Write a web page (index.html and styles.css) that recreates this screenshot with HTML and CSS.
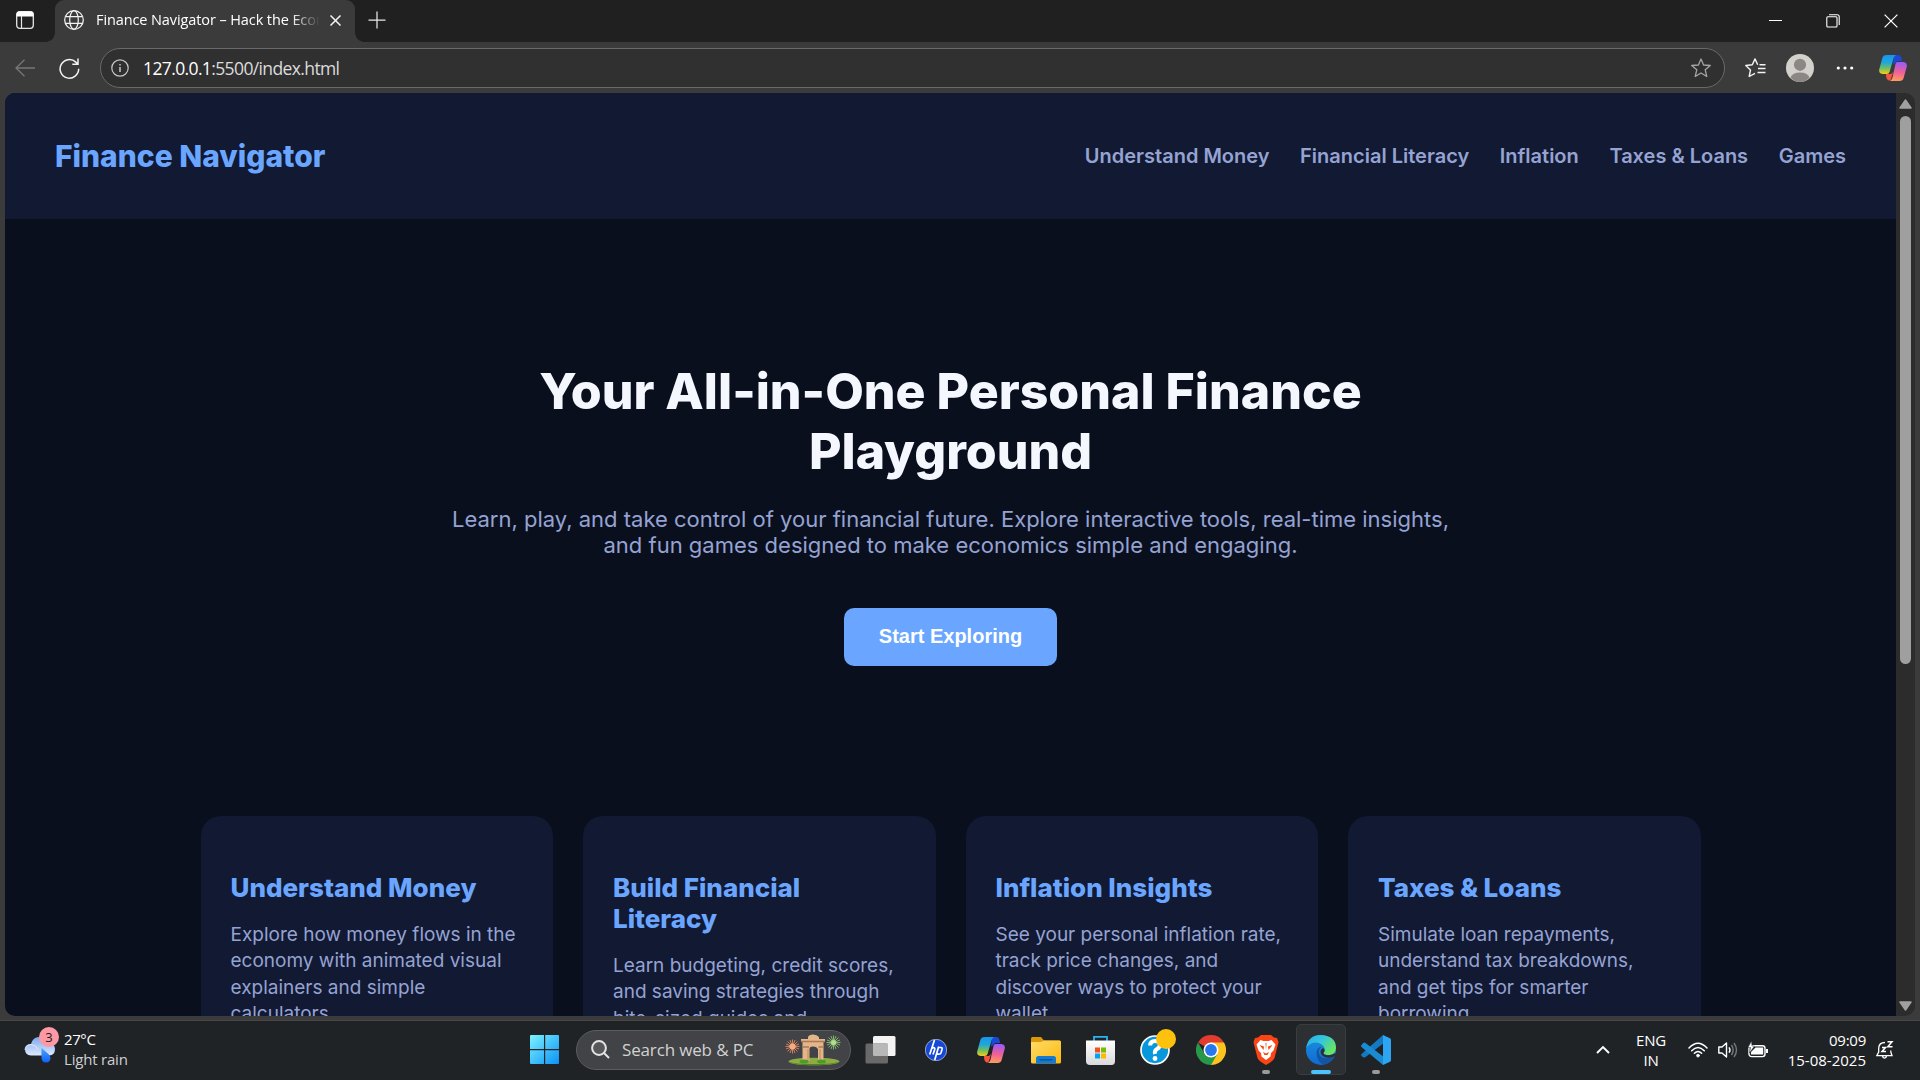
FILE: index.html
```html
<!DOCTYPE html>
<html lang="en">
<head>
<meta charset="utf-8">
<title>Finance Navigator – Hack the Economy</title>
<link rel="stylesheet" href="styles.css">
</head>
<body>
<svg width="0" height="0" class="defs" aria-hidden="true">
  <defs>
    <linearGradient id="cpA" x1="0" y1="0" x2="0" y2="1"><stop offset="0" stop-color="#1695ef"/><stop offset=".4" stop-color="#20a8d8"/><stop offset=".7" stop-color="#72bd63"/><stop offset="1" stop-color="#f5cf18"/></linearGradient>
    <linearGradient id="cpB" x1=".3" y1="0" x2=".2" y2="1"><stop offset="0" stop-color="#9a5cf5"/><stop offset=".5" stop-color="#ef5f98"/><stop offset="1" stop-color="#ffa05a"/></linearGradient>
    <linearGradient id="win" x1="0" y1="0" x2="1" y2="1"><stop offset="0" stop-color="#7df3ff"/><stop offset="1" stop-color="#0a92f5"/></linearGradient>
    <linearGradient id="fold" x1="0" y1="0" x2="1" y2="1"><stop offset="0" stop-color="#ffdc6a"/><stop offset="1" stop-color="#fbb90f"/></linearGradient>
    <linearGradient id="cloud" x1="0" y1="0" x2="0" y2="1"><stop offset="0" stop-color="#7ea9ee"/><stop offset="1" stop-color="#dce9fd"/></linearGradient>
    <linearGradient id="drop" x1="0" y1="0" x2="0" y2="1"><stop offset="0" stop-color="#4aa4f8"/><stop offset="1" stop-color="#0f62fb"/></linearGradient>
    <linearGradient id="edA" x1="0" y1="0" x2="1" y2=".6"><stop offset="0" stop-color="#27a9ee"/><stop offset=".5" stop-color="#35c7d8"/><stop offset="1" stop-color="#6be55f"/></linearGradient>
    <linearGradient id="edB" x1="0" y1="0" x2="0" y2="1"><stop offset="0" stop-color="#1b93e2"/><stop offset="1" stop-color="#0f6ad0"/></linearGradient>
    <linearGradient id="store" x1="0" y1="0" x2="0" y2="1"><stop offset="0" stop-color="#fff"/><stop offset="1" stop-color="#dadada"/></linearGradient>
    <symbol id="copilot" viewBox="0 0 28 26">
      <path d="M15 0H19.500Q21.500 0 22.200 2L23.200 6H19Q17 6 16.500 8L14 9.500Z" fill="#1b48d8"/>
      <path d="M7 19H12L14 17 12 24Q11.500 26 9.500 25.500 7.600 25 7.200 22Z" fill="#f4553d"/>
      <path d="M7.500 0H17Q15.300 .800 14.600 3L10.700 16.500Q10 19 7.500 19H3.500Q-.400 18.500 .200 14.500L3.300 3.200Q4.200 0 7.500 0Z" fill="url(#cpA)"/>
      <path d="M18.500 7H24.500Q28.400 7.500 27.800 11.500L24.700 22.800Q23.800 26 20.500 26H11Q12.700 25.200 13.400 23L16.500 9Q17 7 18.500 7Z" fill="url(#cpB)"/>
    </symbol>
  </defs>
</svg>

<div class="screen">
  <div class="titlebar">
    <div class="workspace">
      <svg width="18" height="18" viewBox="0 0 18 18"><rect x=".7" y=".7" width="16.600" height="16.600" rx="3" fill="none" stroke="#e6e6e6" stroke-width="1.300"/><path d="M.500 5.500V3Q.500.500 3 .500H15Q17.500.500 17.500 3V5.500Z" fill="#fff"/><path d="M5.500 5V17" stroke="#e6e6e6" stroke-width="1.200"/></svg>
    </div>
    <div class="tab">
      <svg class="globe" width="20" height="20" viewBox="0 0 20 20" fill="none" stroke="#f2f2f2" stroke-width="1.250"><circle cx="10" cy="10" r="9.300"/><ellipse cx="10" cy="10" rx="4.300" ry="9.300"/><path d="M1.500 6.600H18.500M1.500 13.400H18.500"/></svg>
      <span class="tab-title">Finance Navigator – Hack the Economy</span>
      <svg width="11" height="11" viewBox="0 0 11 11" stroke="#f5f5f5" stroke-width="1.500"><path d="M.500.500 10.500 10.500M10.500.500.500 10.500"/></svg>
    </div>
    <svg class="newtab" width="18" height="18" viewBox="0 0 18 18" stroke="#e8e8e8" stroke-width="1.250"><path d="M9 .500V17.500M.500 9H17.500"/></svg>
    <div class="window-controls">
      <svg width="13" height="13" viewBox="0 0 13 13"><path d="M0 6.500H13" stroke="#fff"/></svg>
      <svg width="14" height="14" viewBox="0 0 14 14" fill="none" stroke="#fff" stroke-width="1.100"><rect x=".8" y="2.800" width="10.200" height="10.200" rx="1"/><path d="M3 .700H11.200Q13.200.700 13.200 2.700V11"/></svg>
      <svg width="14" height="14" viewBox="0 0 14 14" stroke="#fff" stroke-width="1.250"><path d="M.600.600 13.400 13.400M13.400.600.600 13.400"/></svg>
    </div>
  </div>

  <div class="toolbar">
    <svg class="back" width="20" height="18" viewBox="0 0 20 18" fill="none" stroke="#777" stroke-width="1.300"><path d="M20 9H1M9.500.700 1 9 9.500 17.300"/></svg>
    <svg class="reload" width="21" height="21" viewBox="0 0 21 21" fill="none" stroke="#f4f4f4" stroke-width="1.500"><path d="M19.700 10.800A9.300 9.300 0 1 1 16.800 4.100L18.800 6M19 .500V6.200H13.300"/></svg>
    <div class="address">
      <svg width="18" height="18" viewBox="0 0 18 18" fill="none" stroke="#c8c8c8" stroke-width="1.200"><circle cx="9" cy="9" r="8.200"/><path d="M9 8V13M9 5V6.600" stroke-width="1.500"/></svg>
      <span class="url"><b>127.0.0.1</b>:5500/index.html</span>
      <svg class="star" width="20" height="20" viewBox="0 0 20 20" fill="none" stroke="#a5a5a5" stroke-width="1.300" stroke-linejoin="round"><path d="M10 1 12.600 7 19.300 7.500 14.200 11.800 15.800 18.500 10 15 4.200 18.500 5.800 11.800.700 7.500 7.400 7Z"/></svg>
    </div>
    <svg class="favs" width="21" height="20" viewBox="0 0 21 20" fill="none" stroke="#f4f4f4" stroke-width="1.400" stroke-linejoin="round"><path d="M10 15.400 4.200 18.500 5.500 12 .800 7.500 7.300 6.700 10 .900 12.700 6.700M13 10.500H20.500M12.500 14.500H20.500M14.500 6.700H20.500"/></svg>
    <svg class="avatar" width="28" height="28" viewBox="0 0 28 28"><circle cx="14" cy="14" r="14" fill="#d4d1cd"/><circle cx="14" cy="10.800" r="6.100" fill="#8b8784"/><path d="M4.500 23.500Q6.500 18.500 14 18.500T23.500 23.500Q19.500 28 14 28T4.500 23.500Z" fill="#8b8784"/></svg>
    <svg class="dots" width="18" height="4" viewBox="0 0 18 4" fill="#fff"><circle cx="2.300" cy="2" r="1.600"/><circle cx="9" cy="2" r="1.600"/><circle cx="15.700" cy="2" r="1.600"/></svg>
    <svg class="cp" width="28" height="26"><use href="#copilot"/></svg>
  </div>

  <div class="viewport">
    <div class="page">
      <header class="site-header">
        <div class="logo">Finance Navigator</div>
        <nav class="nav"><a>Understand Money</a><a>Financial Literacy</a><a>Inflation</a><a>Taxes &amp; Loans</a><a>Games</a></nav>
      </header>
      <section class="hero">
        <h1>Your All-in-One Personal Finance Playground</h1>
        <p>Learn, play, and take control of your financial future. Explore interactive tools, real-time insights, and fun games designed to make economics simple and engaging.</p>
        <button class="cta">Start Exploring</button>
      </section>
      <section class="cards">
        <article class="card"><h3>Understand Money</h3><p>Explore how money flows in the economy with animated visual explainers and simple calculators.</p></article>
        <article class="card"><h3>Build Financial Literacy</h3><p>Learn budgeting, credit scores, and saving strategies through bite-sized guides and</p></article>
        <article class="card"><h3>Inflation Insights</h3><p>See your personal inflation rate, track price changes, and discover ways to protect your wallet.</p></article>
        <article class="card"><h3>Taxes &amp; Loans</h3><p>Simulate loan repayments, understand tax breakdowns, and get tips for smarter borrowing.</p></article>
      </section>
    </div>
    <div class="scrollbar">
      <svg width="13" height="10" viewBox="0 0 13 10"><path d="M6.500 1 12 9H1Z" fill="#a0a0a0" stroke="#a0a0a0" stroke-width="1.500" stroke-linejoin="round"/></svg>
      <div class="thumb"></div>
      <svg class="down" width="13" height="10" viewBox="0 0 13 10"><path d="M6.500 9 12 1H1Z" fill="#a0a0a0" stroke="#a0a0a0" stroke-width="1.500" stroke-linejoin="round"/></svg>
    </div>
  </div>

  <div class="taskbar">
    <div class="weather">
      <div class="weather-icon">
        <svg width="32" height="37" viewBox="0 0 32 37"><path d="M7 29.500Q1 29 1 23.500T7 18Q9 11 15 11T23 17Q31 17 31 23T25 29.500Z" fill="url(#cloud)"/><path d="M1 24Q1 19 7 18.500 12 19 14 23" fill="none" stroke="#f0f6ff" stroke-width="1" opacity=".7"/><path d="M17.500 22 24.500 28Q26.500 30 26.500 32.500 26 36.500 22 36.500T17.500 32Z" fill="url(#drop)"/></svg>
        <span class="badge">3</span>
      </div>
      <div class="weather-text"><span>27°C</span><span class="dim">Light rain</span></div>
    </div>
    <div class="apps">
      <div class="app start"><svg width="30" height="30" viewBox="0 0 30 30"><path d="M1 0H14V14H0V1Q0 0 1 0ZM15.200 0H28Q29 0 29 1V14H15.200ZM0 15.200H14V29H1Q0 29 0 28ZM15.200 15.200H29V28Q29 29 28 29H15.200Z" fill="url(#win)"/></svg></div>
      <div class="search">
        <svg width="19" height="19" viewBox="0 0 19 19" fill="none" stroke="#e4e4e4" stroke-width="2"><circle cx="8" cy="8" r="6.900" fill="#56595c"/><path d="M13 13 18 18"/></svg>
        <span>Search web &amp; PC</span>
        <svg class="gate" width="56" height="33" viewBox="0 0 56 33">
          <ellipse cx="29" cy="28.500" rx="25.500" ry="3.800" fill="#8cad42"/><path d="M3.500 28.500Q8 32.300 29 32.300T54 28.500Q50 31 29 31T3.500 28.500" fill="#587d29"/>
          <path d="M23 4Q24 1.500 28 1.500T34 4V6H40V9H38.500V28H33V16.500Q32 13.500 28 13.500T24.500 16.500V28H17.500V9H16V6H23Z" fill="#e3b689"/><path d="M16 8.500H40M18 14H24M33.500 14H38.500" stroke="#ad7853" stroke-width="1.300"/><path d="M23 16V28M35 16V28" stroke="#bd895f" stroke-width="1"/>
          <g stroke="#e5855b" stroke-width=".9"><path d="M7.500 6.500V20.500M.500 13.500H14.500M2.500 8.500 12.500 18.500M12.500 8.500 2.500 18.500M5 7 10 20M10 7 5 20M1 11 14 16M14 11 1 16"/></g><circle cx="7.500" cy="13.500" r="3" fill="#f2ae83"/>
          <g stroke="#84bf6e" stroke-width=".9"><path d="M48.500 2.500V16.500M41.500 9.500H55.500M43.500 4.500 53.500 14.500M53.500 4.500 43.500 14.500M46 3 51 16M51 3 46 16M42 7 55 12M55 7 42 12"/></g><circle cx="48.500" cy="9.500" r="2.500" fill="#b8dd91"/>
          <ellipse cx="19" cy="28.500" rx="4.500" ry="2" fill="#4a9e25"/><ellipse cx="36.500" cy="28.500" rx="4.500" ry="2" fill="#4a9e25"/>
        </svg>
      </div>
      <div class="app"><svg width="31" height="29" viewBox="0 0 31 29"><rect x="8" y="1" width="22.500" height="20" rx="1.500" fill="#f3f3f3"/><rect x=".5" y="8.500" width="22.500" height="20" rx="1.500" fill="#696969"/><path d="M8 8.500H23V21H9.500Q8 21 8 19.500Z" fill="#b8b8b8"/></svg></div>
      <div class="app"><svg width="22" height="22" viewBox="0 0 22 22"><circle cx="11" cy="11" r="10.700" fill="#1647d5" stroke="#e8eefc" stroke-width=".6"/><path d="M9.500 1 4.700 15.500M6.500 9.500Q10.500 7.500 9.700 10.500L8 15.500M13.700 7.500 9.700 21M13 8.500H16Q17.500 8.500 17 10.500L16 13.800Q15.500 15.200 14 15.200H11.500" fill="none" stroke="#fff" stroke-width="1.700"/></svg></div>
      <div class="app"><svg width="28" height="26"><use href="#copilot"/></svg></div>
      <div class="app folder"><svg width="30" height="27" viewBox="0 0 30 27"><path d="M0 1.500Q0 0 1.500 0H10L13 3.500H28Q30 3.500 30 5.500V10H0Z" fill="#dc9806"/><path d="M0 5H10L13 3.500H28.500Q30 3.500 30 5V25Q30 26.500 28.500 26.500H1.500Q0 26.500 0 25Z" fill="url(#fold)"/><path d="M5 26.500V21.500Q5 19 7.500 19H22.500Q25 19 25 21.500V26.500Z" fill="#137bd0"/><path d="M9 22.800H21" stroke="#0755a0" stroke-width="1.400" stroke-linecap="round"/></svg></div>
      <div class="app"><svg width="30" height="30" viewBox="0 0 30 30"><path d="M8 6V1.800H21V6" fill="none" stroke="#28b4f0" stroke-width="1.800"/><path d="M0 5.500H29V26Q29 30 25.500 30H4Q0 30 0 26Z" fill="url(#store)"/><path d="M9 12.500H14V17.500H9Z" fill="#f25022"/><path d="M15 12.500H20V17.500H15Z" fill="#7fba00"/><path d="M9 18.500H14V23.500H9Z" fill="#00a4ef"/><path d="M15 18.500H20V23.500H15Z" fill="#ffb900"/></svg></div>
      <div class="app help"><svg width="36" height="36" viewBox="0 0 36 36"><circle cx="15" cy="21" r="14" fill="#0797dc" stroke="#fff" stroke-width="1.700"/><path d="M10.200 16.500Q10.200 12 15 12T19.800 16Q19.800 18.500 17 20T15 25" fill="none" stroke="#fff" stroke-width="4"/><circle cx="15" cy="29.500" r="2.400" fill="#fff"/><circle cx="26" cy="10" r="10" fill="#ffc20c"/></svg></div>
      <div class="app"><svg width="30" height="30" viewBox="0 0 30 30"><path d="M15 15 2 7.500A15 15 0 0 1 28 7.500Z" fill="#e33b2e"/><path d="M15 15V7.500H28A15 15 0 0 1 15 30Z" fill="#fcc31e"/><path d="M2 7.500 8.500 18.750 15 22.500 21.500 18.750 15 30A15 15 0 0 1 2 7.500Z" fill="#279847"/><circle cx="15" cy="15" r="7.500" fill="#fff"/><circle cx="15" cy="15" r="5.900" fill="#2778ed"/></svg></div>
      <div class="app run"><svg width="26" height="30" viewBox="0 0 26 30"><path d="M8 0H18L21 2.500 24 3 25.500 7 24.800 10 21.500 23Q20.500 26 13 30 5.500 26 4.500 23L1.200 10 .500 7 2 3 5 2.500Z" fill="#fb4415"/><path d="M7.500 5 10.500 6H15.500L18.500 5 22.500 9.500 20.500 15.500 18 18 17.500 21.500 13 25 8.500 21.500 8 18 5.500 15.500 3.500 9.500Z" fill="#fff"/><path d="M6.500 10 11 11.500 10.500 15ZM19.500 10 15 11.500 15.500 15ZM10 17 13 18.500 16 17 14.500 20H11.500ZM12.500 8H13.500L13 16Z" fill="#fb4415"/></svg></div>
      <div class="app active"><svg width="30" height="30" viewBox="0 0 30 30"><circle cx="15" cy="15" r="15" fill="url(#edB)"/><path d="M.300 13Q2 0 15 0 30 1 30 13 29.500 19.500 23 20 18.500 20 17.500 18 19.500 16 18.500 13 16.500 8 10 7.500 3.500 7.500.300 13Z" fill="url(#edA)"/><path d="M10.500 18Q10.500 12.500 16 11.500 11 14.500 13.500 20 17.500 25.500 28 21.500 25 28 17.500 29.500 11 27 10.500 18Z" fill="#1454a5"/><path d="M17 13Q19.500 14.500 18 17 17 18.500 18 19.300 22 21.500 27.500 19 31 17 31 20L28.500 21.500Q21 24.500 16 20.500 12.500 16 17 13Z" fill="#2d3033"/></svg></div>
      <div class="app run"><svg width="30" height="30" viewBox="0 0 30 30"><path d="M0 19.500 22 0 23.500 7.500 4 22.500Q2.500 23 .500 21Z" fill="#1379c3"/><path d="M0 10.500 2.500 7.800Q3.500 7.300 4.500 8L23.500 22.500 22 30 .500 12Q0 11.500 0 10.500Z" fill="#188bd3"/><path d="M22 0 29 3.300Q30 3.800 30 5V25Q30 26.300 29 26.800L22 30Z" fill="#2ca5f2"/></svg></div>
    </div>
    <div class="tray">
      <svg class="chev" width="14" height="9" viewBox="0 0 14 9" fill="none" stroke="#fff" stroke-width="1.900"><path d="M1 8 7 2 13 8"/></svg>
      <div class="lang"><span>ENG</span><span>IN</span></div>
      <svg class="wifi" width="20" height="16" viewBox="0 0 20 16" fill="none" stroke="#fff" stroke-width="1.500" stroke-linecap="round"><path d="M1 6Q10-3.500 19 6M3.700 8.800Q10 2.200 16.300 8.800M6.400 11.300Q10 7.500 13.600 11.300"/><circle cx="10" cy="13.600" r="1.400" fill="#fff" stroke-width=".8"/></svg>
      <svg class="vol" width="20" height="18" viewBox="0 0 20 18" fill="none" stroke="#fff" stroke-width="1.400" stroke-linejoin="round"><path d="M.800 6H4L8.500 2V16L4 12H.800ZM11 6.300Q13 9 11 11.700"/><path d="M13.500 4Q16.800 9 13.500 14M16 2Q21 9 16 16" stroke="#777"/></svg>
      <svg class="bat" width="20" height="17" viewBox="0 0 20 17"><rect x="1" y="4.800" width="16" height="10.800" rx="2.500" fill="none" stroke="#fff" stroke-width="1.400"/><path d="M3 13.500V11L7.500 6.500H15.200V13.500ZM18 8H20V12H18Z" fill="#fff"/><path d="M3.500 0 0 6.500H2.500L1.500 12 6.500 5H4Z" fill="#fff" stroke="#202326" stroke-width=".5"/></svg>
      <div class="clock"><span>09:09</span><span class="date">15-08-2025</span></div>
      <svg class="bell" width="18" height="18" viewBox="0 0 18 18" fill="none" stroke="#fff" stroke-width="1.300"><path d="M9 1.500Q3 1.500 2.700 7V11L.800 14.700H16L14.800 11V9.500M6.500 15Q7 17.200 8.500 17.200T10.500 15"/><path d="M6 6.500H9.500L6 10.500H10M11.500.800H16L11.800 5.800H16.500" stroke-width="1.500"/></svg>
    </div>
  </div>
</div>
</body>
</html>
```

FILE: styles.css
```css
* { box-sizing: border-box; }
body { margin: 0; background: #3b3b3b; }
svg { display: block; flex: none; }
.defs { position: absolute; }

.screen {
  width: 1920px; height: 1080px; overflow: hidden;
  display: flex; flex-direction: column;
  font-family: "Open Sans", "Noto Sans", sans-serif;
  color: #fff;
}

/* Browser chrome */
.titlebar { height: 42px; flex: none; display: flex; background: #202020; }
.workspace { width: 55px; padding: 11px 0 0 16px; border-bottom-right-radius: 9px; background: #202020; }
.tab {
  position: relative; width: 300px; height: 43px; padding: 0 14px 3px 9px;
  display: flex; align-items: center;
  background: #3b3b3b; border-radius: 9px 9px 0 0;
}
.tab::before, .tab::after { content: ""; position: absolute; bottom: 1px; width: 9px; height: 9px; }
.tab::before { left: -9px; background: radial-gradient(circle at 0 0, #202020 8.5px, #3b3b3b 9px); }
.tab::after { right: -9px; background: radial-gradient(circle at 100% 0, #202020 8.5px, #3b3b3b 9px); }
.tab-title {
  width: 224px; margin: 0 10px 1px 12px; overflow: hidden; white-space: nowrap;
  font-size: 14.5px; letter-spacing: -0.1px;
  -webkit-mask-image: linear-gradient(90deg, #000 195px, transparent 224px);
  mask-image: linear-gradient(90deg, #000 195px, transparent 224px);
}
.newtab { margin: 11px 0 0 13px; }
.window-controls { margin: 14px 22px 0 auto; display: flex; gap: 44px; }

.toolbar { height: 51px; flex: none; display: flex; align-items: center; padding: 1px 7px 0 15px; background: #3b3b3b; }
.reload { margin-left: 24px; }
.address {
  width: 1625px; height: 40px; margin-left: 20px; padding: 0 13px 0 10px;
  display: flex; align-items: center;
  background: #303030; border: 1px solid #6a6a6a; border-radius: 20px;
}
.url { margin: 0 auto 1px 14px; font-size: 17.5px; letter-spacing: -0.62px; color: #dcdcdc; white-space: nowrap; }
.url b { font-weight: 400; color: #fff; }
.favs { margin-left: 20px; }
.avatar { margin-left: 20px; }
.dots { margin-left: 22px; }
.cp { margin-left: 25px; }

/* Web page area */
.viewport { height: 923px; margin: 0 5px; flex: none; display: flex; border-radius: 10px; overflow: hidden; }
.page { width: 1891px; height: 923px; overflow: hidden; background: #0a0f1e; font-family: Inter, sans-serif; }
.site-header { height: 126px; padding: 0 50px; display: flex; justify-content: space-between; align-items: center; background: #121932; }
.logo { font-size: 30px; font-weight: 800; color: #6aa6ff; }
.nav { display: flex; gap: 30.6px; font-size: 20px; font-weight: 600; color: #95a3d3; }

.hero { height: 597px; padding-top: 142px; display: flex; flex-direction: column; align-items: center; text-align: center; }
.hero h1 { width: 1000px; margin: 0; font-size: 50px; line-height: 60px; font-weight: 800; color: #f5f7ff; }
.hero p { width: 1000px; margin: 25px 0 0; font-size: 22px; line-height: 26px; color: #95a3d3; }
.cta {
  width: 213px; height: 58px; margin-top: 50px; padding: 0 0 1px;
  border: 0; border-radius: 10px; background: #6aa6ff; color: #fff;
  font: 700 20px "Liberation Sans", Arial, sans-serif;
}
.cards { width: 1500px; margin: 0 auto; display: grid; grid-template-columns: repeat(4, 1fr); gap: 30px; }
.card { height: 330px; padding: 56px 30px 30px; border-radius: 20px; background: #121932; }
.card h3 { margin: 0; font-size: 26px; line-height: 31px; font-weight: 800; color: #6aa6ff; }
.card p { margin: 18.7px 0 0; font-size: 19px; line-height: 26.6px; color: #95a3d3; }

.scrollbar { width: 19px; padding: 6px 4px 5px 3px; display: flex; flex-direction: column; align-items: center; background: #2c2c2c; }
.thumb { width: 11px; height: 548px; margin-top: 7px; border-radius: 6px; background: #9f9f9f; }
.down { margin-top: auto; }

/* Desktop taskbar */
.taskbar { height: 60px; margin-top: 4px; flex: none; display: flex; background: #202326; border-top: 1px solid #484848; font-size: 15px; }
.weather { width: 517px; padding: 5px 0 0 24px; display: flex; }
.weather-icon { position: relative; width: 40px; }
.badge {
  position: absolute; left: 15px; top: 1px; width: 20px; height: 20px;
  border-radius: 50%; background: #fd99a4; color: #1a1a1a;
  font-size: 13px; line-height: 20px; text-align: center;
}
.weather-text, .lang, .clock { display: flex; flex-direction: column; line-height: 20px; white-space: nowrap; }
.weather-text { padding-top: 3px; letter-spacing: -0.4px; }
.dim { color: #cfcfcf; letter-spacing: -0.2px; }

.apps { display: flex; height: 57px; align-items: center; }
.app { position: relative; width: 55px; height: 57px; display: flex; align-items: center; justify-content: center; }
.search {
  width: 275px; height: 40px; margin: 0 2px 0 4px; padding: 0 9px 0 14px;
  display: flex; align-items: center;
  border: 1px solid #5a5c5f; border-radius: 20px; background: #414346;
}
.search span { margin: 0 auto 1px 12px; font-size: 17px; letter-spacing: -0.15px; color: #d2d2d2; white-space: nowrap; }
.help { padding: 0 0 6px 4px; }
.folder { padding-top: 2px; }
.active::before { content: ""; position: absolute; inset: 3px 2px 3px 3px; border: 1px solid #3a3d40; border-radius: 5px; background: #2d3033; }
.active svg { position: relative; }
.run::after, .active::after {
  content: ""; position: absolute; bottom: 4px; left: 24px; width: 8px; height: 4px;
  border-radius: 2px; background: #9a9a9a;
}
.active::after { left: 18px; width: 20px; background: #4cc2ff; }

.tray { margin-left: auto; padding-right: 26px; display: flex; align-items: center; height: 57px; letter-spacing: -0.25px; }
.lang { width: 60px; margin-left: 11px; align-items: center; }
.wifi { margin-left: 7px; }
.vol { margin-left: 10px; }
.bat { margin-left: 10px; }
.clock { width: 98px; align-items: flex-end; }
.date { letter-spacing: 0; }
.bell { margin-left: 10px; }
```
